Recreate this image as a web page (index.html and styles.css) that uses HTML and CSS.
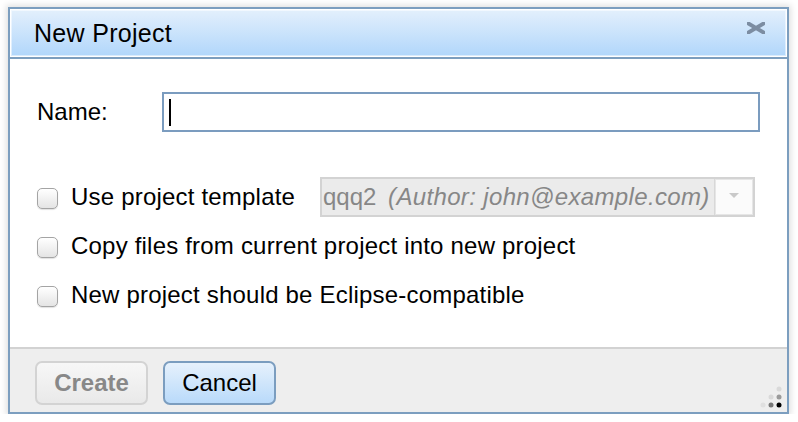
FILE: index.html
```html
<!DOCTYPE html>
<html>
<head>
<meta charset="utf-8">
<link rel="stylesheet" href="styles.css">
</head>
<body>
<div class="dialog">
  <div class="titlebar">
    <span class="title">New Project</span>
    <span class="close">
      <svg width="18" height="12" viewBox="0 0 18 12"><path d="M1.5 1.5 L16.5 10.5 M1.5 10.5 L16.5 1.5" stroke="#7c8da2" stroke-width="3.8" stroke-linecap="round" fill="none"/></svg>
    </span>
  </div>
  <div class="content">
    <div class="name-row">
      <span class="name-label">Name:</span>
      <div class="input"><span class="caret"></span></div>
    </div>
    <div class="options">
      <div class="opt">
        <span class="cb"></span>
        <span class="opt-label">Use project template</span>
        <div class="select">
          <span class="sel-text">qqq2&nbsp; <i>(Author: john@example.com)</i></span>
          <span class="sel-btn"><svg width="10" height="6" viewBox="0 0 10 6"><path d="M0 0 H10 L5 5 Z" fill="#c9c9c9"/></svg></span>
        </div>
      </div>
      <div class="opt">
        <span class="cb"></span>
        <span class="opt-label">Copy files from current project into new project</span>
      </div>
      <div class="opt">
        <span class="cb"></span>
        <span class="opt-label">New project should be Eclipse-compatible</span>
      </div>
    </div>
  </div>
  <div class="footer">
    <button class="btn btn-disabled">Create</button>
    <button class="btn btn-primary">Cancel</button>
    <svg class="grip" width="24" height="24" viewBox="0 0 24 24">
      <circle cx="20" cy="4" r="2.5" fill="#d9d9d9"/>
      <circle cx="12" cy="12" r="2.5" fill="#d9d9d9"/>
      <circle cx="20" cy="12" r="2.5" fill="#9a9a9a"/>
      <circle cx="4" cy="20" r="2.5" fill="#e0e0e0"/>
      <circle cx="12" cy="20" r="2.5" fill="#777"/>
      <circle cx="20" cy="20" r="2.5" fill="#000"/>
    </svg>
  </div>
</div>
</body>
</html>
```
FILE: styles.css
```css
html, body {
  margin: 0;
  padding: 0;
  background: #ffffff;
}
body {
  font-family: "Liberation Sans", Arial, sans-serif;
  color: #000;
}
.dialog {
  margin: 7px 0 0 8px;
  width: 781px;
  box-sizing: border-box;
  border: 2px solid #7c9ebf;
  background: #fff;
  box-shadow: 0 0 6px 2px rgba(0,0,0,0.12);
  position: relative;
}
.titlebar {
  height: 50px;
  box-sizing: border-box;
  border-bottom: 2px solid #7c9ebf;
  box-shadow: inset 0 0 0 1px #fff, inset 0 0 0 2px rgba(255,255,255,0.5);
  background: linear-gradient(#e4f0fc, #b0d6fb);
  display: flex;
  align-items: center;
  justify-content: space-between;
  padding: 0 22px 0 24px;
}
.title {
  font-size: 25px;
  letter-spacing: 0.3px;
  line-height: 1;
}
.close {
  display: flex;
  align-items: center;
  filter: blur(0.3px);
  margin-top: -10px;
}
.content {
  height: 288px;
  box-sizing: border-box;
  padding: 33px 27px 0 27px;
  display: flex;
  flex-direction: column;
}
.name-row {
  display: flex;
  align-items: center;
  height: 40px;
}
.name-label {
  width: 125px;
  font-size: 24px;
}
.input {
  flex: 1;
  height: 40px;
  box-sizing: border-box;
  border: 2px solid #7b9cbf;
  background: #fff;
  display: flex;
  align-items: center;
  padding-left: 5px;
}
.caret {
  width: 2px;
  height: 27px;
  background: #000;
}
.options {
  margin-top: 45px;
  display: flex;
  flex-direction: column;
  gap: 9px;
}
.opt {
  display: flex;
  align-items: center;
  height: 40px;
}
.cb {
  width: 21px;
  height: 21px;
  box-sizing: border-box;
  border: 1px solid #a4a4a4;
  border-radius: 5px;
  background: linear-gradient(#ffffff, #e4e4e4);
  box-shadow: 0 1px 1px rgba(0,0,0,0.12);
  margin-right: 13px;
  margin-top: 2px;
  flex: none;
}
.opt-label {
  font-size: 24px;
  letter-spacing: 0.2px;
  white-space: nowrap;
}
.select {
  margin-left: auto;
  margin-right: 5px;
  width: 435px;
  height: 40px;
  box-sizing: border-box;
  border: 2px solid #d3d3d3;
  background: #ebebeb;
  display: flex;
  align-items: stretch;
}
.sel-text {
  flex: 1;
  font-size: 24px;
  color: #878787;
  display: flex;
  align-items: center;
  padding-left: 1px;
  white-space: nowrap;
  overflow: hidden;
  border-right: 1px solid #d8d8d8;
}
.sel-text i {
  margin-left: 5px;
  letter-spacing: 0.35px;
}
.sel-btn {
  width: 36px;
  background: #fbfbfb;
  border: 1px solid #e6e6e6;
  display: flex;
  align-items: center;
  justify-content: center;
  padding-bottom: 2px;
}
.footer {
  height: 65px;
  box-sizing: border-box;
  border-top: 2px solid #d2d2d2;
  background: #eeeeee;
  display: flex;
  align-items: flex-start;
  gap: 15px;
  padding: 12px 0 0 25px;
  position: relative;
}
.btn {
  width: 113px;
  height: 44px;
  border-radius: 7px;
  font-family: "Liberation Sans", Arial, sans-serif;
  font-size: 24px;
  padding: 0;
  margin: 0;
}
.btn-disabled {
  border: 2px solid #d3d3d3;
  background: linear-gradient(#f7f7f7, #e9e9e9);
  color: #888;
  font-weight: bold;
}
.btn-primary {
  border: 2px solid #7b9dbf;
  background: linear-gradient(#e6f1fc, #b9dafa);
  color: #000;
}
.grip {
  position: absolute;
  right: 4px;
  bottom: 3px;
}
```
